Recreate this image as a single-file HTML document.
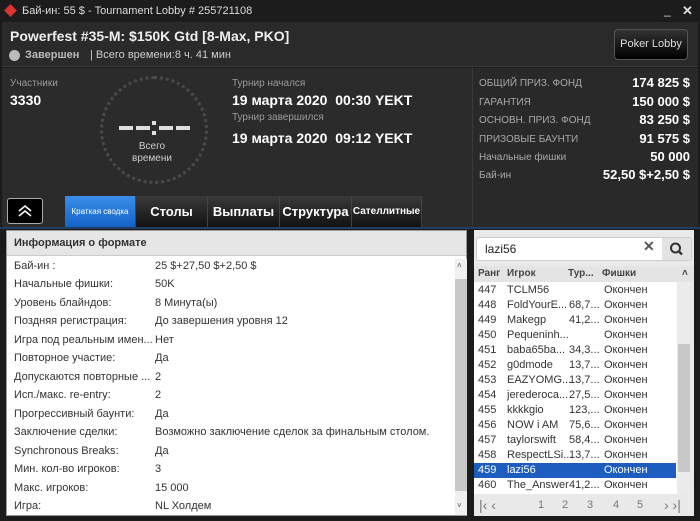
<!DOCTYPE html>
<html><head><meta charset="utf-8"><style>
*{box-sizing:border-box;margin:0;padding:0}
body{width:700px;height:521px;background:#1b1b1b;font-family:"Liberation Sans",sans-serif;position:relative;overflow:hidden;color:#fff}
.a{position:absolute}
.tb{left:0;top:0;width:700px;height:22px;background:#1c1c1c;font-size:11px;color:#ddd}
.hd{left:2px;top:22px;width:696px;height:45px;background:#2a2a2a;border-bottom:1px solid #3a3a3a}
.bd{left:2px;top:68px;width:696px;height:160px;background:#2b2b2b}
.lbl{font-size:10px;color:#9a9a9a}
.big{font-size:14px;font-weight:bold;color:#fff}
.rp{left:472px;top:68px;width:226px;height:158px;border-left:1px solid #3a3a3a;background:#292929}
.rr{position:absolute;left:6px;right:8px;font-size:10px;color:#a8a8a8}
.rr b{position:absolute;right:0;top:-3px;font-size:13px;color:#fff}
.tab{position:absolute;top:196px;height:32px;background:linear-gradient(#3a3a3a,#111);color:#fff;font-weight:bold;font-size:13px;text-align:center;line-height:32px;border-right:1px solid #444}
.lp{left:6px;top:230px;width:461px;height:286px;background:#fff;border:1px solid #999}
.row{position:absolute;left:7px;font-size:11px;color:#333;height:18px;line-height:18px}
.row span{position:absolute;left:141px;white-space:nowrap}
.pl{left:474px;top:230px;width:220px;height:286px;background:#e9e9e9}
.pr{position:absolute;left:0;width:202px;height:15px;line-height:15px;font-size:11px;color:#333}
.pr i{font-style:normal;position:absolute}
.dg{position:absolute;top:0;width:14px;height:4px;background:#ddd}
</style></head><body>
<div class="a tb">
 <div class="a" style="left:6px;top:6px;width:9px;height:9px;background:#d33;transform:rotate(45deg)"></div>
 <div class="a" style="left:22px;top:5px">Бай-ин: 55 $ - Tournament Lobby # 255721108</div>
 <div class="a" style="left:664px;top:3px;font-size:12px">_</div>
 <div class="a" style="left:682px;top:3px;font-size:13px;font-weight:bold">✕</div>
</div>
<div class="a hd">
 <div class="a" style="left:8px;top:6px;font-size:14px;font-weight:bold;color:#eee">Powerfest #35-M: $150K Gtd [8-Max, PKO]</div>
 <div class="a" style="left:7px;top:28px;width:11px;height:11px;border-radius:50%;background:#bbb"></div>
 <div class="a" style="left:23px;top:27px;font-size:11px;font-weight:bold;color:#bbb">Завершен</div>
 <div class="a" style="left:88px;top:27px;font-size:11px;color:#ccc">| Всего времени:8 ч. 41 мин</div>
 <div class="a" style="left:612px;top:7px;width:74px;height:31px;border:1px solid #555;border-radius:4px;background:linear-gradient(#333,#000);font-size:11px;color:#ddd;text-align:center;line-height:29px">Poker Lobby</div>
</div>
<div class="a bd">
 <div class="a lbl" style="left:8px;top:10px">Участники</div>
 <div class="a big" style="left:8px;top:24px">3330</div>
 <div class="a" style="left:98px;top:8px;width:108px;height:108px;border-radius:50%;border:3px dotted #4a4a4a"></div>
 <div class="a" style="left:117px;top:58px;width:70px;height:6px">
  <div class="dg" style="left:0"></div><div class="dg" style="left:17px"></div>
  <div class="a" style="left:33px;top:-5px;width:4px;height:4px;background:#ddd"></div>
  <div class="a" style="left:33px;top:5px;width:4px;height:4px;background:#ddd"></div>
  <div class="dg" style="left:40px"></div><div class="dg" style="left:57px"></div>
 </div>
 <div class="a" style="left:130px;top:73px;font-size:10px;color:#ccc;text-align:center;line-height:12px">Всего<br>времени</div>
 <div class="a lbl" style="left:230px;top:10px">Турнир начался</div>
 <div class="a big" style="left:230px;top:24px">19 марта 2020&nbsp; 00:30 YEKT</div>
 <div class="a lbl" style="left:230px;top:44px">Турнир завершился</div>
 <div class="a big" style="left:230px;top:62px">19 марта 2020&nbsp; 09:12 YEKT</div>
 <div class="a" style="left:5px;top:130px;width:36px;height:26px;border:1px solid #aaa;border-radius:3px;background:#000">
  <svg width="34" height="24"><path d="M11 12l6-5 6 5M11 17l6-5 6 5" stroke="#fff" stroke-width="1.6" fill="none"/></svg></div>
</div>
<div class="a rp">
 <div class="rr" style="top:10px">ОБЩИЙ ПРИЗ. ФОНД<b>174 825 $</b></div>
 <div class="rr" style="top:29px">ГАРАНТИЯ<b>150 000 $</b></div>
 <div class="rr" style="top:47px">ОСНОВН. ПРИЗ. ФОНД<b>83 250 $</b></div>
 <div class="rr" style="top:66px">ПРИЗОВЫЕ БАУНТИ<b>91 575 $</b></div>
 <div class="rr" style="top:84px">Начальные фишки<b>50 000</b></div>
 <div class="rr" style="top:102px">Бай-ин<b>52,50 $+2,50 $</b></div>
</div>
<div class="tab" style="left:65px;width:71px;background:linear-gradient(#3a8ee8,#1262c8);font-size:8px;font-weight:normal">Краткая сводка</div>
<div class="tab" style="left:136px;width:72px">Столы</div>
<div class="tab" style="left:208px;width:72px">Выплаты</div>
<div class="tab" style="left:280px;width:72px">Структура</div>
<div class="tab" style="left:352px;width:70px;font-size:10px">Сателлитные</div>
<div class="a" style="left:0;top:227px;width:700px;height:2px;background:#1f3f66"></div>
<div class="a lp">
 <div class="a" style="left:0;top:0;width:459px;height:25px;background:#e6e6e6;border-bottom:1px solid #ccc;font-size:11px;font-weight:bold;color:#333;padding:6px 7px">Информация о формате</div>
 <div class="a" style="left:448px;top:28px;width:12px;height:256px;background:#f0f0f0"><div class="a" style="left:0;top:20px;width:12px;height:212px;background:#c8c8c8"></div><div class="a" style="left:2px;top:2px;font-size:8px;color:#555">˄</div><div class="a" style="left:2px;top:242px;font-size:8px;color:#555">˅</div></div>
 <div class="row" style="top:26px">Бай-ин :<span>25 $+27,50 $+2,50 $</span></div>
 <div class="row" style="top:44px">Начальные фишки:<span>50K</span></div>
 <div class="row" style="top:63px">Уровень блайндов:<span>8 Минута(ы)</span></div>
 <div class="row" style="top:81px">Поздняя регистрация:<span>До завершения уровня 12</span></div>
 <div class="row" style="top:100px">Игра под реальным имен...<span>Нет</span></div>
 <div class="row" style="top:118px">Повторное участие:<span>Да</span></div>
 <div class="row" style="top:137px">Допускаются повторные ...<span>2</span></div>
 <div class="row" style="top:155px">Исп./макс. re-entry:<span>2</span></div>
 <div class="row" style="top:174px">Прогрессивный баунти:<span>Да</span></div>
 <div class="row" style="top:192px">Заключение сделки:<span>Возможно заключение сделок за финальным столом.</span></div>
 <div class="row" style="top:211px">Synchronous Breaks:<span>Да</span></div>
 <div class="row" style="top:229px">Мин. кол-во игроков:<span>3</span></div>
 <div class="row" style="top:248px">Макс. игроков:<span>15 000</span></div>
 <div class="row" style="top:266px">Игра:<span>NL Холдем</span></div>
</div>
<div class="a pl">
 <div class="a" style="left:2px;top:7px;width:216px;height:24px;background:#fff;border:1px solid #ccc;border-radius:3px;font-size:12px;color:#222;padding:4px 8px">lazi56</div>
 <div class="a" style="left:169px;top:8px;font-size:14px;color:#555;font-weight:bold">✕</div>
 <div class="a" style="left:188px;top:8px;width:29px;height:22px;background:#e3e3e3">
  <svg width="29" height="22"><circle cx="13.5" cy="10" r="4.5" stroke="#333" stroke-width="2" fill="none"/><path d="M16.5 13l3.5 3.5" stroke="#333" stroke-width="2.4"/></svg></div>
 <div class="a" style="left:0;top:36px;width:220px;height:16px;background:#e4e4e4;font-size:10px;font-weight:bold;color:#444;line-height:16px">
  <span class="a" style="left:4px">Ранг</span><span class="a" style="left:33px">Игрок</span><span class="a" style="left:94px">Тур...</span><span class="a" style="left:128px">Фишки</span><span class="a" style="left:208px">˄</span></div>
 <div class="a" style="left:0;top:52px;width:203px;height:212px;background:#fff"></div>
 <div class="a" style="left:204px;top:52px;width:12px;height:210px;background:#ececec"><div class="a" style="left:0;top:62px;width:12px;height:128px;background:#c8c8c8"></div></div>
 <div class="pr" style="top:53px"><i style="left:4px">447</i><i style="left:33px">TCLM56</i><i style="left:130px">Окончен</i></div>
 <div class="pr" style="top:68px"><i style="left:4px">448</i><i style="left:33px">FoldYourE...</i><i style="left:95px">68,7...</i><i style="left:130px">Окончен</i></div>
 <div class="pr" style="top:83px"><i style="left:4px">449</i><i style="left:33px">Makegp</i><i style="left:95px">41,2...</i><i style="left:130px">Окончен</i></div>
 <div class="pr" style="top:98px"><i style="left:4px">450</i><i style="left:33px">Pequeninh...</i><i style="left:130px">Окончен</i></div>
 <div class="pr" style="top:113px"><i style="left:4px">451</i><i style="left:33px">baba65ba...</i><i style="left:95px">34,3...</i><i style="left:130px">Окончен</i></div>
 <div class="pr" style="top:128px"><i style="left:4px">452</i><i style="left:33px">g0dmode</i><i style="left:95px">13,7...</i><i style="left:130px">Окончен</i></div>
 <div class="pr" style="top:143px"><i style="left:4px">453</i><i style="left:33px">EAZYOMG...</i><i style="left:95px">13,7...</i><i style="left:130px">Окончен</i></div>
 <div class="pr" style="top:158px"><i style="left:4px">454</i><i style="left:33px">jerederoca...</i><i style="left:95px">27,5...</i><i style="left:130px">Окончен</i></div>
 <div class="pr" style="top:173px"><i style="left:4px">455</i><i style="left:33px">kkkkgio</i><i style="left:95px">123,...</i><i style="left:130px">Окончен</i></div>
 <div class="pr" style="top:188px"><i style="left:4px">456</i><i style="left:33px">NOW i AM</i><i style="left:95px">75,6...</i><i style="left:130px">Окончен</i></div>
 <div class="pr" style="top:203px"><i style="left:4px">457</i><i style="left:33px">taylorswift</i><i style="left:95px">58,4...</i><i style="left:130px">Окончен</i></div>
 <div class="pr" style="top:218px"><i style="left:4px">458</i><i style="left:33px">RespectLSi...</i><i style="left:95px">13,7...</i><i style="left:130px">Окончен</i></div>
 <div class="pr" style="top:233px;background:#1d5dbf;color:#fff"><i style="left:4px">459</i><i style="left:33px">lazi56</i><i style="left:130px">Окончен</i></div>
 <div class="pr" style="top:248px"><i style="left:4px">460</i><i style="left:33px">The_Answer</i><i style="left:95px">41,2...</i><i style="left:130px">Окончен</i></div>
 <div class="a" style="left:0;top:264px;width:220px;height:22px;font-size:11px;color:#777;line-height:22px">
  <span class="a" style="left:5px;font-size:14px">|‹ ‹</span><span class="a" style="left:64px">1</span><span class="a" style="left:88px">2</span><span class="a" style="left:113px">3</span><span class="a" style="left:139px">4</span><span class="a" style="left:163px">5</span><span class="a" style="left:190px;font-size:14px">› ›|</span></div>
</div>
</body></html>
